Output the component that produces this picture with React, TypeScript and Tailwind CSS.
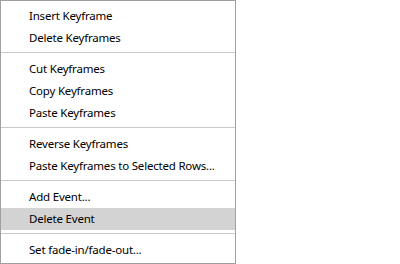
import React from "react";

type Entry = { label: string; active?: boolean } | "sep";

const entries: Entry[] = [
  { label: "Insert Keyframe" },
  { label: "Delete Keyframes" },
  "sep",
  { label: "Cut Keyframes" },
  { label: "Copy Keyframes" },
  { label: "Paste Keyframes" },
  "sep",
  { label: "Reverse Keyframes" },
  { label: "Paste Keyframes to Selected Rows..." },
  "sep",
  { label: "Add Event..." },
  { label: "Delete Event", active: true },
  "sep",
  { label: "Set fade-in/fade-out..." },
];

export default function App() {
  return (
    <div className="h-[264px] w-[400px] bg-white">
      <div
        className="flex h-[264px] w-[236px] flex-col border border-[#a0a0a0] bg-white pt-[4px] text-[11.5px] tracking-[-0.2px] text-black"
        style={{ fontFamily: '"Noto Sans", "Open Sans", sans-serif' }}
      >
        {entries.map((e, i) =>
          e === "sep" ? (
            <div key={i} className="mt-[3px] mb-[5px] h-px bg-[#cacaca]" />
          ) : (
            <div
              key={i}
              className={`flex h-[22px] shrink-0 items-center pl-[28px] leading-none ${
                e.active ? "bg-[#d3d3d3]" : ""
              }`}
            >
              {e.label}
            </div>
          )
        )}
      </div>
    </div>
  );
}
